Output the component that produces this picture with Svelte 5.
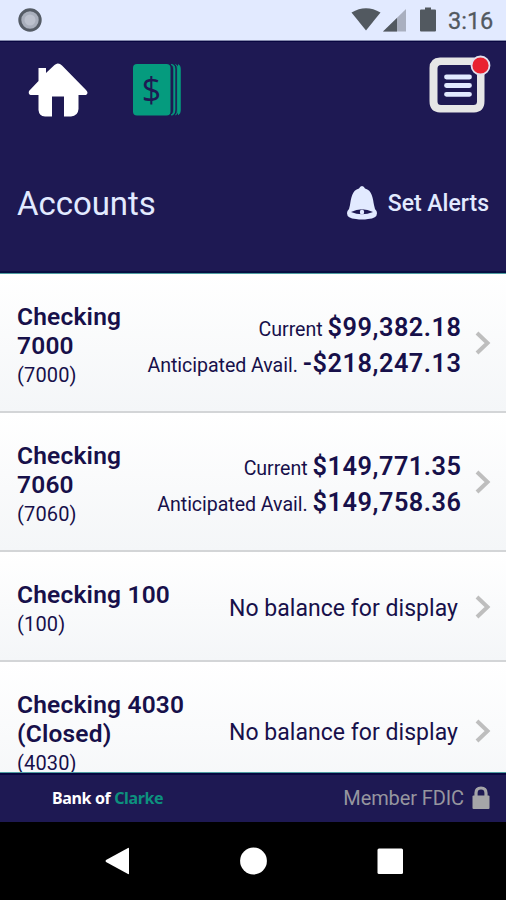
<script>
  const accounts = [
    { name: ['Checking', '7000'], id: '7000', balances: [['Current', '$99,382.18'], ['Anticipated Avail.', '-$218,247.13']] },
    { name: ['Checking', '7060'], id: '7060', balances: [['Current', '$149,771.35'], ['Anticipated Avail.', '$149,758.36']] },
    { name: ['Checking 100'], id: '100', balances: [] },
    { name: ['Checking 4030', '(Closed)'], id: '4030', balances: [] }
  ];
</script>

<div class="phone">
  <div class="status">
    <svg class="dot" width="26" height="26" viewBox="0 0 26 26">
      <circle cx="13" cy="13" r="10.2" fill="#a9afbc" stroke="#555c66" stroke-width="3" />
      <circle cx="13" cy="13" r="5.5" fill="#bcc1cd" />
    </svg>
    <svg width="88" height="28" viewBox="0 0 88 28">
      <path d="M.5 6.500Q15 -2 29.500 6.500L15 24.500Z" fill="#525960" />
      <path d="M55 3V25.500H32Z" fill="#a9afbf" />
      <path d="M46 12V25.500H32Z" fill="#525960" />
      <path d="M74 1.500h6v2h4q1 0 1 1v20q0 1-1 1H70q-1 0-1-1v-20q0-1 1-1h4z" fill="#525960" />
    </svg>
    <span class="time">3:16</span>
  </div>

  <header>
    <nav>
      <svg class="home" width="64" height="56" viewBox="0 0 64 56">
        <path d="M32 1.500Q30.500 1.300 28.500 3L20 11V6H12.500V19L3 29Q2 32 4.500 33H12.500V48Q13 54 19 54.500H26V34.500H38V54.500H45Q52 54 52.500 47V33H60Q63 31 60 28L36 3.500Q34 1.500 32 1.500Z" fill="#fff" />
      </svg>
      <svg class="cash" width="52" height="54" viewBox="0 0 52 54">
        <rect x="1" y="1" width="37.500" height="51.500" rx="4" fill="#059b7e" />
        <path d="M39 1.500Q41.700 2 41.700 6V47Q41.700 51 39 52H40.500Q43 51 43 47V6Q43 2 40.500 1.500ZM43.500 1.500Q45.300 2 45.300 6V47Q45.300 51 43.500 52Q46 51 46 47V6Q46 2 43.500 1.500ZM46 1.500Q48.400 2 48.400 6V47Q48.400 51 46 52" fill="#059b7e" stroke="#059b7e" stroke-width=".7" />
        <text x="19.500" y="38.500" text-anchor="middle">$</text>
      </svg>
      <svg class="menu" width="64" height="60" viewBox="0 0 64 60">
        <path fill-rule="evenodd" d="M12 2.500H46Q56.500 3 56.500 13V46Q56.500 57 46 57.500H12Q1.500 57 1.500 46V13Q1.500 3 12 2.500ZM13 10Q9.500 10 9.500 13.500V46.500Q9.500 50 13 50H45.500Q49 50 49 46.500V13.500Q49 10 45.500 10Z" fill="#e6e6e6" />
        <path d="M18.500 22H41.500M18.500 30.500H41.500M18.500 39.300H41.500" stroke="#e2eaff" stroke-width="4.800" stroke-linecap="round" />
        <circle cx="52.500" cy="10.500" r="9" fill="#e9222f" stroke="#e2e0ed" stroke-width="1.800" />
      </svg>
    </nav>
    <div class="heading">
      <h1>Accounts</h1>
      <div class="alerts">
        <svg width="32" height="36" viewBox="0 0 32 36">
          <path d="M16 1Q18 1 19 3.500C26 5 27 14 28 20Q28.500 24 30.500 26Q33 33 22 34Q16 35 10 34Q-1 33 1.500 26Q3.500 24 4 20C5 14 6 5 13 3.500Q14 1 16 1Z" fill="#e2eaff" />
          <path d="M5 27Q16 21.500 27 27Q16 31.500 5 27Z" fill="#1e1953" />
          <ellipse cx="16" cy="27" rx="2.200" ry="2.500" fill="#e2eaff" />
        </svg>
        <span>Set Alerts</span>
      </div>
    </div>
  </header>

  <main>
    {#each accounts as account}
      <section>
        <div class="name">
          {#each account.name as line}<strong>{line}</strong>{/each}
          <small>({account.id})</small>
        </div>
        <div class="info">
          {#if account.balances.length}
            {#each account.balances as [label, amount]}
              <div class="balance"><span>{label}</span><b>{amount}</b></div>
            {/each}
          {:else}
            <p>No balance for display</p>
          {/if}
        </div>
        <svg class="arrow" width="18" height="24" viewBox="0 0 18 24">
          <path d="M3 2L13.500 12L3 22" fill="none" stroke="#bebebe" stroke-width="4" />
        </svg>
      </section>
    {/each}
  </main>

  <footer>
    <div class="brand">Bank of <span>Clarke</span></div>
    <div class="fdic">
      <span>Member FDIC</span>
      <svg width="18" height="24" viewBox="0 0 18 24">
        <rect x=".5" y="9.500" width="17" height="13.500" rx="1" fill="#a5a5a8" />
        <path d="M4 11V7Q4 2 9 2T14 7V11" fill="none" stroke="#a5a5a8" stroke-width="3.200" />
      </svg>
    </div>
  </footer>

  <div class="android">
    <svg width="300" height="28" viewBox="0 0 300 28">
      <path d="M25 1Q26 .5 26 1.500V26.500Q26 27.500 25 27L3 15Q2 14 3 13Z" fill="#fff" />
      <circle cx="150.500" cy="14" r="13.400" fill="#fff" />
      <rect x="274.500" y="1.500" width="25.500" height="25.500" rx="1.500" fill="#fff" />
    </svg>
  </div>
</div>

<style>
  .phone { width: 506px; height: 900px; display: flex; flex-direction: column; overflow: hidden; font-family: Roboto, sans-serif; color: #17104a; background: #fff; }
  svg { display: block; flex: none; }
  .status { height: 41px; flex: none; box-sizing: border-box; display: flex; align-items: center; padding: 0 12px 0 17px; background: #e2eaff; border-bottom: 1px solid #858bad; color: #525960; }
  .dot { margin-right: auto; }
  .time { font-size: 23.5px; line-height: 28px; margin-left: 9px; width: 46px; padding-top: 2px; white-space: nowrap; -webkit-text-stroke: .3px #525960; }
  header { height: 233px; flex: none; box-sizing: border-box; background: #1e1953; border-top: 1px solid #080640; border-bottom: 1px solid #4e9da0; box-shadow: inset 0 -2px #080f43; }
  nav { display: flex; height: 94px; padding: 13px 14px 0 26px; box-sizing: border-box; align-items: flex-start; }
  .home { margin-top: 7px; }
  .cash { margin: 8px auto 0 42px; }
  .cash text { font: 34px "Open Sans", sans-serif; fill: #1e1953; }
  .heading { display: flex; align-items: center; justify-content: space-between; padding: 38px 17px 0; height: 58px; }
  h1 { margin: 0; font-size: 33px; font-weight: 400; line-height: 40px; color: #e2eaff; letter-spacing: -.05px; padding-top: 1px; }
  .alerts { display: flex; align-items: center; color: #e2eaff; font-weight: 500; font-size: 23px; }
  .alerts span { margin-left: 10px; }
  main { flex: 1; min-height: 0; overflow: hidden; }
  section { display: flex; align-items: center; box-sizing: border-box; border-bottom: 2px solid #d3d5d7; background: linear-gradient(#fff, #f4f6f8); padding: 28px 14px 21px 17px; }
  .name { flex: 1; }
  strong, small { display: block; white-space: nowrap; line-height: 29px; }
  strong { font-size: 24.5px; font-weight: 600; letter-spacing: .2px; }
  small { font-size: 20px; letter-spacing: .15px; padding-top: 1px; }
  .info { text-align: right; }
  .balance { height: 36px; display: flex; justify-content: flex-end; align-items: baseline; line-height: 36px; white-space: nowrap; }
  .balance span { font-size: 19.6px; letter-spacing: -.05px; margin-right: 5px; }
  .balance b { font-size: 25.3px; font-weight: 600; letter-spacing: .52px; margin-right: -.5px; }
  p { margin: 0 3px 2px 0; font-size: 23px; line-height: 30px; letter-spacing: .04px; white-space: nowrap; }
  .arrow { margin: 0 0 6px 13px; }
  footer { height: 50px; flex: none; box-sizing: border-box; display: flex; justify-content: space-between; align-items: center; background: #1e1953; border-top: 1px solid #4e9da0; box-shadow: inset 0 2px #080640; padding: 0 16px 0 52px; }
  .brand { font: 700 16px "Noto Sans", sans-serif; letter-spacing: -.36px; color: #fff; white-space: nowrap; }
  .brand span { color: #0d917e; }
  .fdic { display: flex; align-items: center; color: #96969f; font-size: 20px; letter-spacing: -.1px; gap: 8px; }
  .android { height: 78px; flex: none; background: #000; display: flex; align-items: center; justify-content: center; }
</style>
